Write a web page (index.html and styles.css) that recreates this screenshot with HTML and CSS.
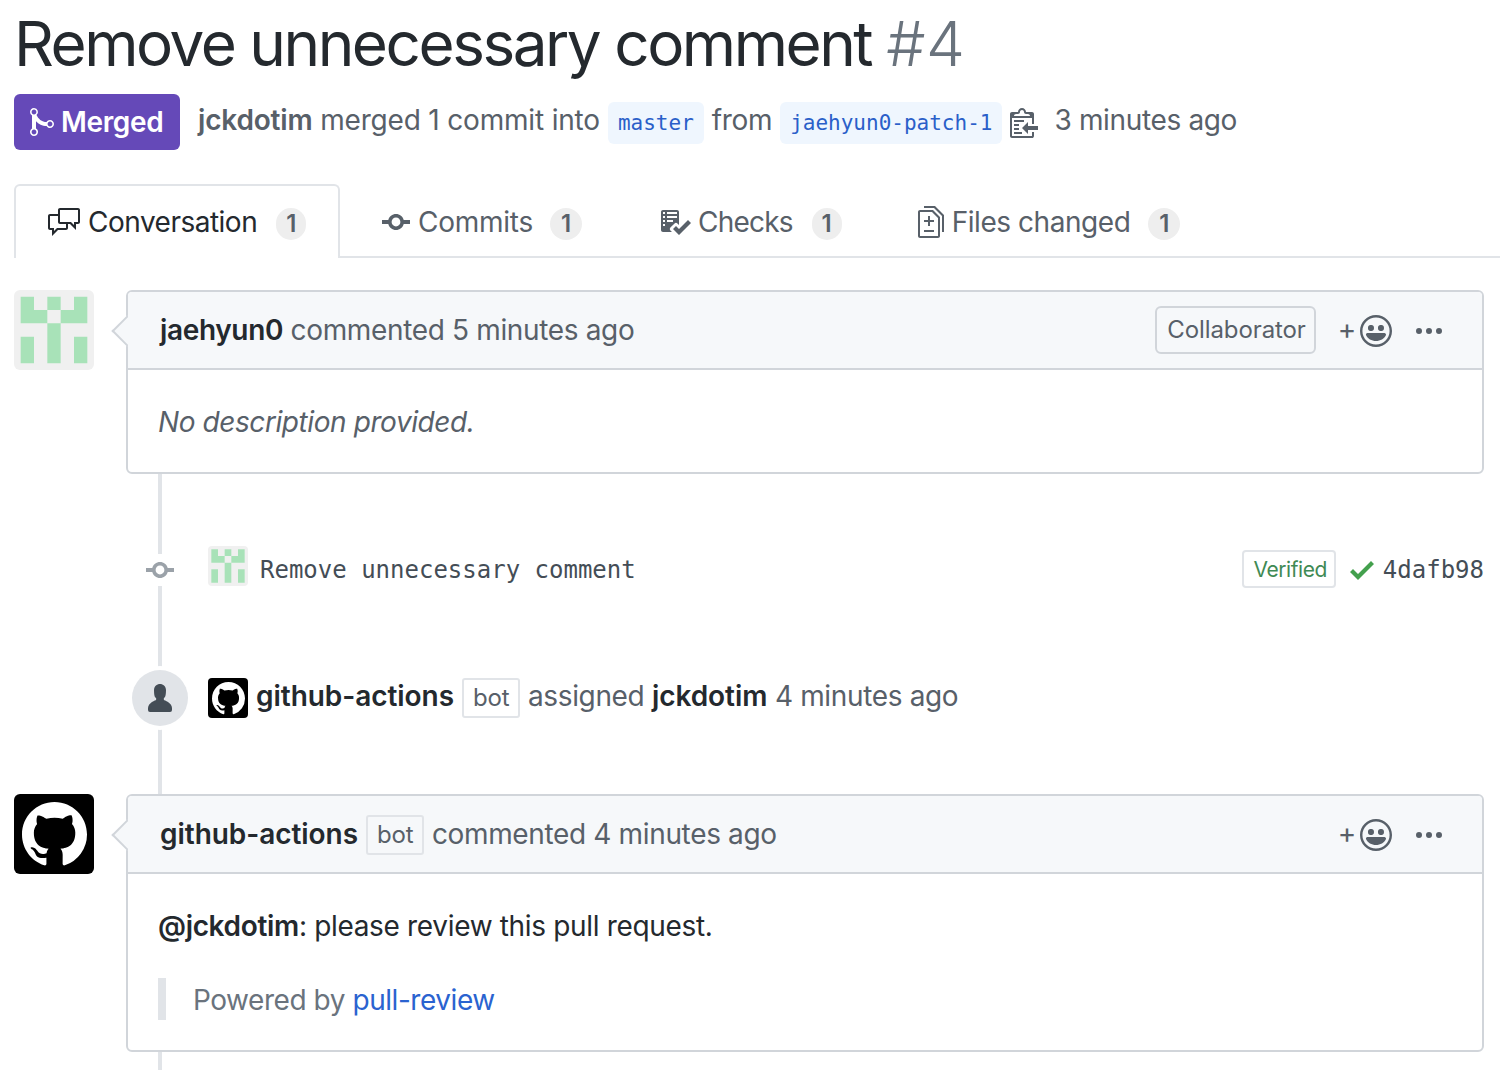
FILE: index.html
```html
<!DOCTYPE html>
<html lang="en">
<head>
<meta charset="utf-8">
<title>Remove unnecessary comment #4</title>
<link rel="stylesheet" href="styles.css">
</head>
<body>
<svg class="defs" aria-hidden="true">
  <symbol id="smiley" viewBox="0 0 16 16"><path fill-rule="evenodd" d="M8 0C3.58 0 0 3.58 0 8s3.58 8 8 8 8-3.58 8-8-3.58-8-8-8zm4.81 12.81a6.72 6.72 0 0 1-2.17 1.45c-.83.36-1.72.53-2.64.53-.92 0-1.81-.17-2.64-.53-.81-.34-1.55-.83-2.17-1.45a6.773 6.773 0 0 1-1.45-2.17A6.59 6.59 0 0 1 1.21 8c0-.92.17-1.81.53-2.64.34-.81.83-1.55 1.45-2.17.62-.62 1.36-1.11 2.17-1.45A6.59 6.59 0 0 1 8 1.21c.92 0 1.81.17 2.64.53.81.34 1.55.83 2.17 1.45.62.62 1.11 1.36 1.45 2.17.36.83.53 1.72.53 2.64 0 .92-.17 1.81-.53 2.64-.34.81-.83 1.55-1.45 2.17zM4 6.8v-.59c0-.66.53-1.19 1.2-1.19h.59c.66 0 1.19.53 1.19 1.19v.59c0 .67-.53 1.2-1.19 1.2H5.2C4.53 8 4 7.47 4 6.8zm5 0v-.59c0-.66.53-1.19 1.2-1.19h.59c.66 0 1.19.53 1.19 1.19v.59c0 .67-.53 1.2-1.19 1.2h-.59C9.53 8 9 7.47 9 6.8zm4 3.2c-.72 1.88-2.91 3-5 3s-4.28-1.13-5-3c-.14-.39.23-1 .66-1h8.59c.41 0 .89.61.75 1z"/></symbol>
  <symbol id="kebab" viewBox="0 0 13 16"><path fill-rule="evenodd" d="M1.5 9a1.5 1.5 0 1 0 0-3 1.5 1.5 0 0 0 0 3zm5 0a1.5 1.5 0 1 0 0-3 1.5 1.5 0 0 0 0 3zM13 7.5a1.5 1.5 0 1 1-3 0 1.5 1.5 0 0 1 3 0z"/></symbol>
  <symbol id="mark" viewBox="0 0 16 16"><path fill-rule="evenodd" d="M8 0C3.58 0 0 3.58 0 8c0 3.54 2.29 6.53 5.47 7.59.4.07.55-.17.55-.38 0-.19-.01-.82-.01-1.49-2.01.37-2.53-.49-2.69-.94-.09-.23-.48-.94-.82-1.13-.28-.15-.68-.52-.01-.53.63-.01 1.08.58 1.23.82.72 1.21 1.87.87 2.33.66.07-.52.28-.87.51-1.07-1.78-.2-3.64-.89-3.64-3.95 0-.87.31-1.59.82-2.15-.08-.2-.36-1.02.08-2.12 0 0 .67-.21 2.2.82.64-.18 1.32-.27 2-.27.68 0 1.36.09 2 .27 1.53-1.04 2.2-.82 2.2-.82.44 1.1.16 1.92.08 2.12.51.56.82 1.27.82 2.15 0 3.07-1.87 3.75-3.65 3.95.29.25.54.73.54 1.48 0 1.07-.01 1.93-.01 2.2 0 .21.15.46.55.38A8.013 8.013 0 0 0 16 8c0-4.42-3.58-8-8-8z"/></symbol>
  <symbol id="identicon" viewBox="0 0 6 6"><rect width="6" height="6" fill="#f0f0f0"/><path fill="#a8e2b8" d="M.5.5h1v1h-1zM2.5.5h1v1h-1zM4.5.5h1v1h-1zM.5 1.5h2v1h-2zM3.5 1.5h2v1h-2zM2.5 2.5h1v3h-1zM.5 3.5h1v2h-1zM4.5 3.5h1v2h-1z"/></symbol>
</svg>

<main class="page">
  <h1 class="title">Remove unnecessary comment <span class="num">#4</span></h1>

  <div class="meta">
    <span class="state">
      <svg class="state-icon" viewBox="0 0 12 16"><path fill-rule="evenodd" d="M10 7c-.73 0-1.38.41-1.73 1.02V8C7.22 7.98 6 7.64 5.14 6.98c-.75-.58-1.5-1.61-1.89-2.44A1.993 1.993 0 0 0 2 .99C.89.99 0 1.89 0 3a2 2 0 0 0 1 1.72v6.56c-.59.35-1 .99-1 1.72 0 1.11.89 2 2 2a1.993 1.993 0 0 0 1-3.72V7.67c.67.7 1.44 1.27 2.3 1.69.86.42 2.03.63 2.97.64v-.02c.36.61 1 1.02 1.73 1.02 1.11 0 2-.89 2-2 0-1.11-.89-2-2-2zm-6.8 6c0 .66-.55 1.2-1.2 1.2-.65 0-1.2-.55-1.2-1.2 0-.65.55-1.2 1.2-1.2.65 0 1.2.55 1.2 1.2zM2 4.2C1.34 4.2.8 3.65.8 3c0-.65.55-1.2 1.2-1.2.65 0 1.2.55 1.2 1.2 0 .65-.55 1.2-1.2 1.2zm8 6c-.66 0-1.2-.55-1.2-1.2 0-.65.55-1.2 1.2-1.2.65 0 1.2.55 1.2 1.2 0 .65-.55 1.2-1.2 1.2z"/></svg>
      Merged
    </span>
    <span class="meta-text lead"><b class="author">jckdotim</b> merged 1 commit into</span>
    <code class="branch">master</code>
    <span class="meta-text">from</span>
    <code class="branch">jaehyun0-patch-1</code>
    <svg class="clippy" viewBox="0 0 14 16"><path fill-rule="evenodd" d="M2 13h4v1H2v-1zm5-6H2v1h5V7zm2 3V8l-3 3 3 3v-2h5v-2H9zM4.5 9H2v1h2.5V9zM2 12h2.5v-1H2v1zm9 1h1v2c-.02.28-.11.52-.3.7-.19.18-.42.28-.7.3H1c-.55 0-1-.45-1-1V4c0-.55.45-1 1-1h3c0-1.11.89-2 2-2 1.11 0 2 .89 2 2h3c.55 0 1 .45 1 1v5h-1V6H1v9h10v-2zM2 5h8c0-.55-.45-1-1-1H8c-.55 0-1-.45-1-1s-.45-1-1-1-1 .45-1 1-.45 1-1 1H3c-.55 0-1 .45-1 1z"/></svg>
    <span class="meta-text ago">3 minutes ago</span>
  </div>

  <nav class="tabs">
    <a class="tab active">
      <svg class="tab-icon i-conv" viewBox="0 0 16 16"><path fill-rule="evenodd" d="M15 1H6c-.55 0-1 .45-1 1v2H1c-.55 0-1 .45-1 1v6c0 .55.45 1 1 1h1v3l3-3h4c.55 0 1-.45 1-1V9h1l3 3V9h1c.55 0 1-.45 1-1V2c0-.55-.45-1-1-1zM9 11H4.5L3 12.5V11H1V5h4v3c0 .55.45 1 1 1h3v2zm6-3h-2v1.5L11.5 8H6V2h9v6z"/></svg>
      Conversation <span class="counter">1</span>
    </a>
    <a class="tab t-commits">
      <svg class="tab-icon i-commit" viewBox="0 0 14 16"><path fill-rule="evenodd" d="M10.86 7c-.45-1.72-2-3-3.86-3-1.86 0-3.41 1.28-3.86 3H0v2h3.14c.45 1.72 2 3 3.86 3 1.86 0 3.41-1.28 3.86-3H14V7h-3.14zM7 10.2c-1.22 0-2.2-.98-2.2-2.2 0-1.22.98-2.2 2.2-2.2 1.22 0 2.2.98 2.2 2.2 0 1.22-.98 2.2-2.2 2.2z"/></svg>
      Commits <span class="counter">1</span>
    </a>
    <a class="tab t-checks">
      <svg class="tab-icon i-check" viewBox="0 0 16 16"><path fill-rule="evenodd" d="M16 8.5l-6 6-3-3L8.5 10l1.5 1.5L14.5 7 16 8.5zM5.7 12.2l.8.8H2c-.55 0-1-.45-1-1V3c0-.55.45-1 1-1h7c.55 0 1 .45 1 1v6.5l-.8-.8c-.39-.39-1.03-.39-1.42 0L5.7 10.8a.996.996 0 0 0 0 1.41v-.01zM4 4h5V3H4v1zm0 2h5V5H4v1zm0 2h3V7H4v1zM3 9H2v1h1V9zm0-2H2v1h1V7zm0-2H2v1h1V5zm0-2H2v1h1V3z"/></svg>
      Checks <span class="counter">1</span>
    </a>
    <a class="tab t-files">
      <svg class="tab-icon i-diff" viewBox="0 0 13 16"><path fill-rule="evenodd" d="M6 7h2v1H6v2H5V8H3V7h2V5h1v2zm-3 6h5v-1H3v1zM7.5 2L11 5.5V15c0 .55-.45 1-1 1H1c-.55 0-1-.45-1-1V3c0-.55.45-1 1-1h6.5zM10 6L7 3H1v12h9V6zM8.5 0H3v1h5l4 4v8h1V4.5L8.5 0z"/></svg>
      Files changed <span class="counter">1</span>
    </a>
  </nav>

  <section class="thread">
    <article class="entry">
      <svg class="avatar"><use href="#identicon"/></svg>
      <div class="box">
        <header class="box-head">
          <span class="head-text"><b class="strong">jaehyun0</b> commented 5 minutes ago</span>
          <span class="role">Collaborator</span>
          <span class="plus">+</span>
          <svg class="smiley"><use href="#smiley"/></svg>
          <svg class="kebab"><use href="#kebab"/></svg>
        </header>
        <div class="box-body first-body">
          <em class="nodesc">No description provided.</em>
        </div>
      </div>
    </article>

    <div class="event commit-event">
      <span class="badge-slot">
        <svg class="commit-node" viewBox="0 0 14 16"><path fill-rule="evenodd" d="M10.86 7c-.45-1.72-2-3-3.86-3-1.86 0-3.41 1.28-3.86 3H0v2h3.14c.45 1.72 2 3 3.86 3 1.86 0 3.41-1.28 3.86-3H14V7h-3.14zM7 10.2c-1.22 0-2.2-.98-2.2-2.2 0-1.22.98-2.2 2.2-2.2 1.22 0 2.2.98 2.2 2.2 0 1.22-.98 2.2-2.2 2.2z"/></svg>
      </span>
      <svg class="mini-avatar rounded"><use href="#identicon"/></svg>
      <code class="commit-msg">Remove unnecessary comment</code>
      <span class="verified">Verified</span>
      <svg class="ok" viewBox="0 0 12 16"><path fill-rule="evenodd" d="M12 5l-8 8-4-4 1.5-1.5L4 10l6.5-6.5L12 5z"/></svg>
      <code class="sha">4dafb98</code>
    </div>

    <div class="event assign-event">
      <span class="badge-slot">
        <span class="person-badge">
          <svg class="person" viewBox="0 0 12 16"><path fill-rule="evenodd" d="M12 14.002a.998.998 0 0 1-.998.998H1.001A1 1 0 0 1 0 13.999V13c0-2.633 4-4 4-4s.229-.409 0-1c-.841-.62-.944-1.59-1-4 .173-2.413 1.867-3 3-3s2.827.586 3 3c-.056 2.41-.159 3.38-1 4-.229.59 0 1 0 1s4 1.367 4 4v1.002z"/></svg>
        </span>
      </span>
      <span class="gh-avatar mini"><svg class="gh-mark"><use href="#mark"/></svg></span>
      <span class="event-text"><b class="strong loose">github-actions</b> <span class="bot">bot</span> assigned <b class="strong loose">jckdotim</b> 4 minutes ago</span>
    </div>

    <article class="entry">
      <span class="gh-avatar large"><svg class="gh-mark"><use href="#mark"/></svg></span>
      <div class="box">
        <header class="box-head">
          <span class="head-text"><b class="strong loose">github-actions</b> <span class="bot">bot</span> commented 4 minutes ago</span>
          <span class="plus">+</span>
          <svg class="smiley"><use href="#smiley"/></svg>
          <svg class="kebab"><use href="#kebab"/></svg>
        </header>
        <div class="box-body">
          <p class="para"><b class="mention">@jckdotim</b>: please review this pull request.</p>
          <blockquote class="quote">Powered by <a class="link">pull-review</a></blockquote>
        </div>
      </div>
    </article>
  </section>
</main>
</body>
</html>
```

FILE: styles.css
```css
* { box-sizing: border-box; }
html, body { margin: 0; background: #fff; }
body {
  font-family: Inter, "Liberation Sans", sans-serif;
  font-size: 28px;
  line-height: 1.5;
  color: #24292e;
  overflow: hidden;
  height: 1070px;
}
.defs { position: absolute; width: 0; height: 0; }
.page { padding-left: 14px; }

.title {
  margin: 0;
  height: 94px;
  font-size: 62px;
  line-height: 88px;
  font-weight: 400;
  letter-spacing: -2.47px;
  white-space: nowrap;
}
.num { color: #6a737d; font-weight: 300; letter-spacing: .6px; }

.meta { display: flex; align-items: center; height: 56px; white-space: nowrap; letter-spacing: -.35px; }
.state {
  display: flex; align-items: center;
  width: 166px; height: 56px;
  padding-left: 16px;
  border-radius: 6px;
  background: #6549b8;
  color: #fff;
  font-weight: 600;
}
.state-icon { width: 24px; height: 32px; fill: #fff; margin-right: 7px; }
.meta-text { color: #586069; margin-top: -4px; }
.lead { margin-left: 18px; letter-spacing: -.18px; }
.author { font-weight: 600; }
.branch {
  display: block;
  height: 42px;
  margin: 2px 8px 0;
  padding: 0 10px;
  border-radius: 6px;
  background: #eff6fe;
  color: #2a5fc9;
  font: 21px/42px "DejaVu Sans Mono", monospace;
  letter-spacing: 0;
}
.clippy { width: 28px; height: 32px; fill: #586069; margin-right: 16px; flex: none; }

.tabs {
  display: flex;
  height: 74px;
  margin-top: 34px;
  border-bottom: 2px solid #e1e4e8;
  white-space: nowrap;
  letter-spacing: -.35px;
}
.tab {
  display: flex; align-items: center;
  height: 74px;
  padding: 2px 40px 0;
  color: #586069;
}
.tab.active {
  width: 326px;
  padding: 0 32px;
  background: #fff;
  border: 2px solid #e1e4e8;
  border-bottom: 0;
  border-radius: 6px 6px 0 0;
  color: #24292e;
  letter-spacing: -.5px;
}
.t-commits { padding-left: 42px; padding-right: 39px; letter-spacing: -.25px; }
.t-checks { padding-left: 38px; padding-right: 38px; letter-spacing: -.8px; }
.t-files { padding-left: 38px; letter-spacing: -.45px; }
.tab-icon { height: 32px; fill: currentColor; margin-right: 8px; flex: none; }
.i-conv { width: 32px; }
.i-commit { width: 28px; }
.i-check { width: 32px; margin-right: 7px; }
.i-diff { width: 26px; }
.counter {
  display: block;
  min-width: 30px; height: 32px;
  margin: 4px 0 0 18px;
  border-radius: 16px;
  background: #eeeeee;
  color: #586069;
  font-size: 24px;
  font-weight: 600;
  line-height: 32px;
  text-align: center;
  letter-spacing: 0;
}
.active .counter, .t-checks .counter { margin-left: 19px; }
.t-commits .counter { margin-left: 17px; }
.t-commits .counter, .t-files .counter { min-width: 32px; }

.thread { position: relative; isolation: isolate; margin: 32px 16px 0 0; padding-bottom: 18px; }
.thread::before {
  content: "";
  position: absolute;
  left: 144px; top: 0; bottom: 0;
  width: 4px;
  background: #e1e4e8;
  z-index: -1;
}
.entry { display: flex; gap: 32px; align-items: flex-start; }
.avatar { width: 80px; height: 80px; border-radius: 6px; flex: none; }
.box {
  position: relative;
  flex: 1;
  background: #fff;
  border: 2px solid #d1d5da;
  border-radius: 6px;
}
.box::before {
  content: "";
  position: absolute;
  left: -12px; top: 28px;
  width: 20px; height: 20px;
  background: #f6f8fa;
  border-left: 2px solid #d1d5da;
  border-bottom: 2px solid #d1d5da;
  transform: rotate(45deg);
}
.box-head {
  position: relative;
  display: flex; align-items: center;
  height: 78px;
  padding: 0 40px 0 32px;
  background: #f6f8fa;
  border-bottom: 2px solid #d1d5da;
  border-radius: 4px 4px 0 0;
  color: #586069;
  white-space: nowrap;
  letter-spacing: -.35px;
}
.head-text { margin-right: auto; display: flex; align-items: center; white-space: pre; }
.strong { font-weight: 600; color: #24292e; }
.loose { letter-spacing: -.05px; }
.role {
  display: block;
  height: 48px;
  padding: 0 8px 0 10px;
  margin-right: 22px;
  border: 2px solid #d1d5da;
  border-radius: 6px;
  font-size: 24px;
  line-height: 44px;
  letter-spacing: -.1px;
}
.plus { font-size: 28px; line-height: 1; margin: -2px 4px 0 0; color: #586069; }
.smiley { width: 32px; height: 32px; fill: #586069; margin: 2px 24px 0 0; }
.kebab { width: 26px; height: 32px; fill: #586069; margin-top: 4px; }

.box-body { padding: 32px 30px 30px; }
.first-body { height: 102px; padding: 32px 30px 0; }
.nodesc { display: block; color: #586069; line-height: 40px; letter-spacing: -.42px; }
.para { margin: 0; line-height: 40px; letter-spacing: -.33px; }
.mention { font-weight: 600; }
.quote {
  margin: 32px 0 0;
  height: 42px;
  padding-left: 27px;
  border-left: 8px solid #e1e4e8;
  color: #6a737d;
  line-height: 44px;
  letter-spacing: -.45px;
}
.link { color: #2a63d0; }

.event { display: flex; align-items: center; margin-left: 118px; }
.badge-slot { width: 56px; display: flex; justify-content: center; margin-right: 20px; flex: none; }
.commit-event { height: 192px; }
.commit-node { width: 28px; height: 32px; fill: #9ba2a9; background: #fff; }
.rounded { border-radius: 4px; }
.mini-avatar { width: 40px; height: 40px; margin-top: -8px; flex: none; }
.commit-msg, .sha { font: 24px/32px "DejaVu Sans Mono", monospace; color: #444d56; white-space: pre; }
.commit-msg { margin-left: 12px; margin-right: auto; }
.verified {
  display: block;
  height: 38px;
  margin-top: -2px;
  padding: 0 7px 0 9px;
  border: 2px solid #e1e4e8;
  border-radius: 4px;
  color: #3f8a55;
  font-size: 21px;
  line-height: 36px;
  letter-spacing: -.45px;
}
.ok { width: 24px; height: 32px; fill: #43a04d; margin: 0 9px 0 14px; flex: none; }

.assign-event { height: 64px; margin-bottom: 64px; color: #586069; letter-spacing: -.35px; }
.person-badge {
  display: flex; align-items: center; justify-content: center;
  width: 56px; height: 56px;
  border-radius: 50%;
  background: #e1e4e8;
  box-shadow: 0 0 0 4px #fff;
}
.person { width: 24px; height: 32px; fill: #444d56; }
.gh-avatar { display: flex; align-items: center; justify-content: center; background: #000; flex: none; }
.gh-avatar.mini { width: 40px; height: 40px; border-radius: 4px; }
.gh-avatar.large { width: 80px; height: 80px; border-radius: 6px; }
.gh-mark { fill: #fff; }
.mini .gh-mark { width: 33px; height: 33px; }
.large .gh-mark { width: 65px; height: 65px; }
.event-text { margin: -4px 0 0 8px; display: flex; align-items: center; white-space: pre; }
.bot {
  display: block;
  height: 40px;
  margin: 4px 0 0 8px;
  padding: 0 9px;
  border: 2px solid #e1e4e8;
  border-radius: 3px;
  font-size: 24px;
  font-weight: 400;
  line-height: 36px;
  color: #586069;
  letter-spacing: -.2px;
}
.head-text .bot { margin-top: 2px; }
```
